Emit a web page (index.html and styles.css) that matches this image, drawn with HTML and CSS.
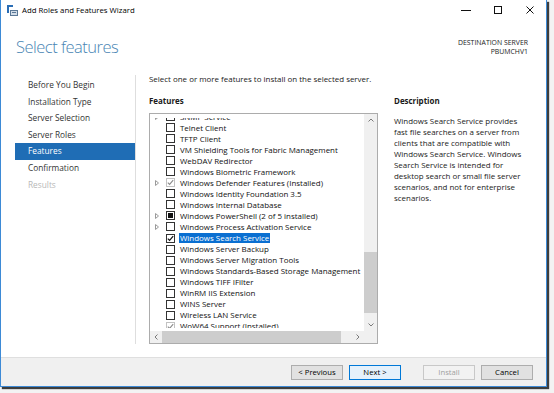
FILE: index.html
```html
<!DOCTYPE html>
<html lang="en">
<head>
<meta charset="utf-8">
<title>Add Roles and Features Wizard</title>
<link rel="stylesheet" href="styles.css">
</head>
<body>
<div class="window">
  <div class="titlebar">
    <svg class="app-icon" width="11" height="11" viewBox="0 0 11 11">
      <rect x="0" y="0" width="2" height="8" fill="#2a6db5"/>
      <rect x="0" y="0" width="6" height="2" fill="#2a6db5"/>
      <rect x="3.5" y="5.5" width="7" height="5" fill="#d3dde8" stroke="#5a7896"/>
      <line x1="5" y1="7.5" x2="9" y2="7.5" stroke="#5a7896"/>
    </svg>
    <span class="title">Add Roles and Features Wizard</span>
    <div class="caption">
      <span class="cap-btn"><svg width="10" height="10" viewBox="0 0 10 10"><line x1="0" y1="5.5" x2="10" y2="5.5" stroke="#111"/></svg></span>
      <span class="cap-btn"><svg width="10" height="10" viewBox="0 0 10 10"><rect x="1.5" y="1.5" width="7" height="7" fill="none" stroke="#111"/></svg></span>
      <span class="cap-btn"><svg width="10" height="10" viewBox="0 0 10 10"><path d="M1.5 1.5 L8.5 8.5 M8.5 1.5 L1.5 8.5" stroke="#111" fill="none"/></svg></span>
    </div>
  </div>

  <div class="header">
    <h1 class="page-title">Select features</h1>
    <div class="dest">
      <div>DESTINATION SERVER</div>
      <div>PBUMCHV1</div>
    </div>
  </div>

  <div class="main">
    <nav class="nav">
      <ul class="nav-list">
        <li>Before You Begin</li>
        <li>Installation Type</li>
        <li>Server Selection</li>
        <li>Server Roles</li>
        <li class="active">Features</li>
        <li>Confirmation</li>
        <li class="disabled">Results</li>
      </ul>
    </nav>

    <section class="content">
      <p class="intro">Select one or more features to install on the selected server.</p>
      <div class="panes">
        <div class="features-pane">
          <div class="label">Features</div>
          <div class="listbox">
            <div class="rows">
              <div class="viewport">
                <div class="rows-inner">
                  <div class="row"><span class="exp"><svg width="4" height="6" viewBox="0 0 4 6"><path d="M0.5 0.5 L3.5 3 L0.5 5.5 Z" fill="none" stroke="#9a9a9a"/></svg></span><span class="cb"></span><span class="txt">SNMP Service</span></div>
                  <div class="row"><span class="exp"></span><span class="cb"></span><span class="txt">Telnet Client</span></div>
                  <div class="row"><span class="exp"></span><span class="cb"></span><span class="txt">TFTP Client</span></div>
                  <div class="row"><span class="exp"></span><span class="cb"></span><span class="txt">VM Shielding Tools for Fabric Management</span></div>
                  <div class="row"><span class="exp"></span><span class="cb"></span><span class="txt">WebDAV Redirector</span></div>
                  <div class="row"><span class="exp"></span><span class="cb"></span><span class="txt">Windows Biometric Framework</span></div>
                  <div class="row"><span class="exp"><svg width="4" height="6" viewBox="0 0 4 6"><path d="M0.5 0.5 L3.5 3 L0.5 5.5 Z" fill="none" stroke="#9a9a9a"/></svg></span><span class="cb dis"><svg width="7" height="7" viewBox="0 0 7 7"><path d="M0.8 3.6 L2.6 5.4 L6.2 1.2" fill="none" stroke="#8a8a8a" stroke-width="1.1"/></svg></span><span class="txt">Windows Defender Features (Installed)</span></div>
                  <div class="row"><span class="exp"></span><span class="cb"></span><span class="txt">Windows Identity Foundation 3.5</span></div>
                  <div class="row"><span class="exp"></span><span class="cb"></span><span class="txt">Windows Internal Database</span></div>
                  <div class="row"><span class="exp"><svg width="4" height="6" viewBox="0 0 4 6"><path d="M0.5 0.5 L3.5 3 L0.5 5.5 Z" fill="none" stroke="#9a9a9a"/></svg></span><span class="cb ind"><span class="ind-mark"></span></span><span class="txt">Windows PowerShell (2 of 5 installed)</span></div>
                  <div class="row"><span class="exp"><svg width="4" height="6" viewBox="0 0 4 6"><path d="M0.5 0.5 L3.5 3 L0.5 5.5 Z" fill="none" stroke="#9a9a9a"/></svg></span><span class="cb"></span><span class="txt">Windows Process Activation Service</span></div>
                  <div class="row sel"><span class="exp"></span><span class="cb"><svg width="7" height="7" viewBox="0 0 7 7"><path d="M0.8 3.6 L2.6 5.4 L6.2 1.2" fill="none" stroke="#111" stroke-width="1.2"/></svg></span><span class="txt">Windows Search Service</span></div>
                  <div class="row"><span class="exp"></span><span class="cb"></span><span class="txt">Windows Server Backup</span></div>
                  <div class="row"><span class="exp"></span><span class="cb"></span><span class="txt">Windows Server Migration Tools</span></div>
                  <div class="row"><span class="exp"></span><span class="cb"></span><span class="txt">Windows Standards-Based Storage Management</span></div>
                  <div class="row"><span class="exp"></span><span class="cb"></span><span class="txt">Windows TIFF IFilter</span></div>
                  <div class="row"><span class="exp"></span><span class="cb"></span><span class="txt">WinRM IIS Extension</span></div>
                  <div class="row"><span class="exp"></span><span class="cb"></span><span class="txt">WINS Server</span></div>
                  <div class="row"><span class="exp"></span><span class="cb"></span><span class="txt">Wireless LAN Service</span></div>
                  <div class="row"><span class="exp"></span><span class="cb dis"><svg width="7" height="7" viewBox="0 0 7 7"><path d="M0.8 3.6 L2.6 5.4 L6.2 1.2" fill="none" stroke="#8a8a8a" stroke-width="1.1"/></svg></span><span class="txt">WoW64 Support (Installed)</span></div>
                </div>
              </div>
            </div>
            <div class="vscroll">
              <span class="arrow"><svg width="6" height="4" viewBox="0 0 6 4"><path d="M0.5 3.5 L3 1 L5.5 3.5" fill="none" stroke="#7a7a7a"/></svg></span>
              <div class="vtrack"><div class="vthumb"></div></div>
              <span class="arrow"><svg width="6" height="4" viewBox="0 0 6 4"><path d="M0.5 0.5 L3 3 L5.5 0.5" fill="none" stroke="#7a7a7a"/></svg></span>
            </div>
            <div class="hscroll">
              <span class="harrow"><svg width="4" height="6" viewBox="0 0 4 6"><path d="M3.5 0.5 L1 3 L3.5 5.5" fill="none" stroke="#7a7a7a"/></svg></span>
              <div class="htrack"><div class="hthumb"></div></div>
              <span class="harrow"><svg width="4" height="6" viewBox="0 0 4 6"><path d="M0.5 0.5 L3 3 L0.5 5.5" fill="none" stroke="#7a7a7a"/></svg></span>
            </div>
            <div class="corner"></div>
          </div>
        </div>
        <div class="desc-pane">
          <div class="label">Description</div>
          <p class="desc-text">Windows Search Service provides<br>fast file searches on a server from<br>clients that are compatible with<br>Windows Search Service. Windows<br>Search Service is intended for<br>desktop search or small file server<br>scenarios, and not for enterprise<br>scenarios.</p>
        </div>
      </div>
    </section>
  </div>

  <div class="footer">
    <button class="btn">&lt; Previous</button>
    <button class="btn default">Next &gt;</button>
    <button class="btn disabled gap-big">Install</button>
    <button class="btn">Cancel</button>
  </div>
</div>
</body>
</html>
```

FILE: styles.css
```css
* {
  box-sizing: border-box;
  margin: 0;
  padding: 0;
}

html, body {
  width: 554px;
  height: 393px;
  overflow: hidden;
}

body {
  background: #f3f3f3;
  font-family: "Open Sans", "Noto Sans", sans-serif;
  font-size: 7.95px;
  color: #1a1a1a;
}

.window {
  width: 547px;
  height: 387px;
  border: 1px solid #3d8ad6;
  border-top: none;
  background: #fff;
  box-shadow: 2px 2px 1px rgba(0, 0, 0, 0.75);
  display: flex;
  flex-direction: column;
}

/* title bar */
.titlebar {
  height: 20px;
  flex: none;
  display: flex;
  align-items: center;
}

.app-icon {
  margin-left: 6px;
  flex: none;
}

.title {
  margin-left: 4px;
  font-size: 7.8px;
  color: #000;
}

.caption {
  margin-left: auto;
  align-self: stretch;
  display: flex;
}

.cap-btn {
  width: 32px;
  display: flex;
  align-items: center;
  justify-content: center;
}

/* header */
.header {
  height: 52px;
  flex: none;
  display: flex;
  justify-content: space-between;
  padding: 16px 18px 0 15px;
}

.page-title {
  font-weight: 300;
  font-size: 16.5px;
  letter-spacing: -0.5px;
  line-height: 22px;
  color: #4a86b4;
}

.dest {
  text-align: right;
  font-size: 6.9px;
  line-height: 9px;
  padding-top: 2px;
  color: #222;
}

/* main */
.main {
  flex: 1;
  display: flex;
  padding: 3px 0 13px 0;
  min-height: 0;
}

.nav {
  width: 135px;
  flex: none;
  border-right: 1px solid #dedede;
  padding: 2px 0 0 14px;
}

.nav-list {
  list-style: none;
}

.nav-list li {
  height: 16.6px;
  line-height: 16.6px;
  padding-left: 13px;
  font-size: 8.3px;
  color: #333;
}

.nav-list li.active {
  background: #1f6db5;
  color: #fff;
}

.nav-list li.disabled {
  color: #b8b8b8;
}

.content {
  flex: 1;
  padding-left: 13px;
}

.intro {
  line-height: 11px;
  margin-top: -1px;
}

.panes {
  display: flex;
  gap: 16px;
  margin-top: 11px;
}

.features-pane {
  width: 229px;
  flex: none;
}

.label {
  font-weight: 700;
  line-height: 11px;
}

.listbox {
  margin-top: 6px;
  height: 231px;
  border: 1px solid #acacac;
  display: grid;
  grid-template-columns: 1fr 13px;
  grid-template-rows: 1fr 12px;
}

.rows {
  grid-column: 1;
  grid-row: 1;
  padding: 4px 0 3px 0;
  min-height: 0;
}

.viewport {
  height: 100%;
  overflow: hidden;
}

.rows-inner {
  margin-top: -7px;
}

.row {
  height: 11.06px;
  display: flex;
  align-items: center;
  white-space: nowrap;
  color: #111;
}

.exp {
  width: 13px;
  flex: none;
  display: flex;
  justify-content: center;
  align-items: center;
}

.exp svg {
  display: block;
}

.cb {
  margin-left: 3px;
  width: 9px;
  height: 9px;
  border: 1px solid #333;
  background: #fff;
  flex: none;
  display: flex;
  align-items: center;
  justify-content: center;
}

.cb svg {
  display: block;
}

.cb.dis {
  border-color: #c2c2c2;
}

.ind-mark {
  width: 5px;
  height: 5px;
  background: #111;
}

.txt {
  margin-left: 4px;
  padding: 0 1px;
  line-height: 10px;
}

.row.sel .txt {
  background: #0a6fd1;
  color: #fff;
}

.vscroll {
  grid-column: 2;
  grid-row: 1;
  background: #f0f0f0;
  display: flex;
  flex-direction: column;
}

.arrow {
  height: 12px;
  flex: none;
  display: flex;
  align-items: center;
  justify-content: center;
}

.vtrack {
  flex: 1;
  padding-top: 126px;
}

.vthumb {
  height: 61px;
  background: #cdcdcd;
}

.hscroll {
  grid-column: 1;
  grid-row: 2;
  background: #f0f0f0;
  display: flex;
}

.harrow {
  width: 12px;
  flex: none;
  display: flex;
  align-items: center;
  justify-content: center;
}

.htrack {
  flex: 1;
  display: flex;
  align-items: stretch;
}

.hthumb {
  width: 179px;
  background: #cdcdcd;
}

.corner {
  grid-column: 2;
  grid-row: 2;
  background: #f0f0f0;
}

.desc-pane {
  flex: 1;
}

.desc-text {
  margin-top: 9px;
  line-height: 11px;
  color: #222;
}

/* footer */
.footer {
  height: 29px;
  flex: none;
  background: #f0f0f0;
  border-top: 1px solid #dfdfdf;
  display: flex;
  justify-content: flex-end;
  align-items: flex-start;
  gap: 6px;
  padding: 7px 13px 0 0;
}

.btn {
  width: 52px;
  height: 15px;
  border: 1px solid #adadad;
  background: #e1e1e1;
  font-family: inherit;
  font-size: 7.7px;
  line-height: 13px;
  color: #000;
  text-align: center;
}

.btn.default {
  border-color: #0078d7;
  background: #e5f1fb;
}

.btn.disabled {
  border-color: #c8c8c8;
  background: #f2f2f2;
  color: #a0a0a0;
}

.gap-big {
  margin-left: 16px;
}
```
